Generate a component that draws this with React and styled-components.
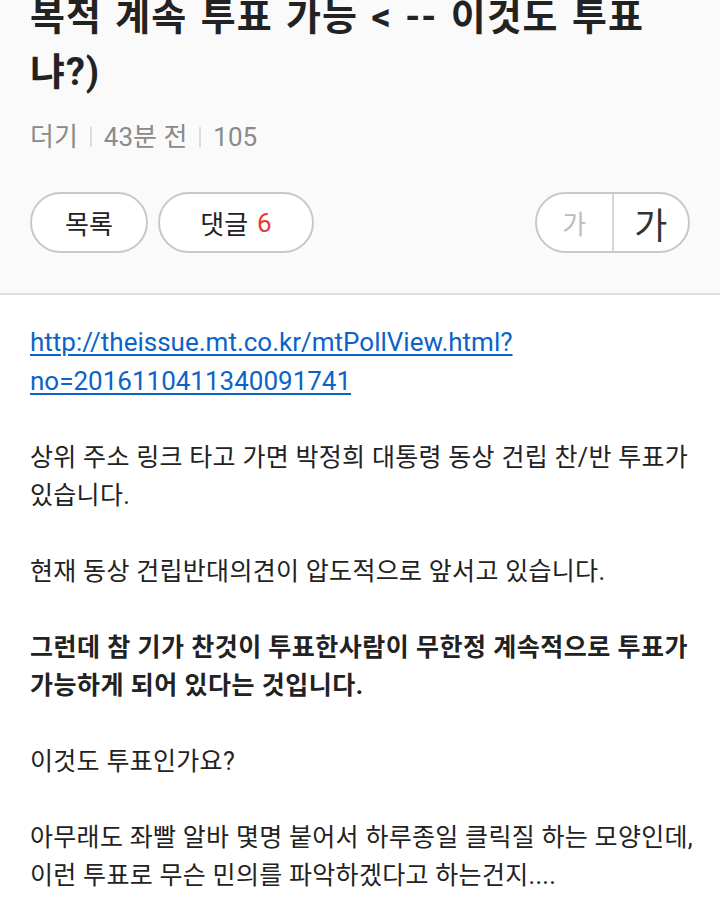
import React from "react";
import styled, { createGlobalStyle } from "styled-components";

const Global = createGlobalStyle`
  html, body { margin: 0; padding: 0; background: #ffffff; }
  body {
    font-family: Roboto, "Noto Sans CJK KR", sans-serif;
    -webkit-font-smoothing: antialiased;
  }
  * { box-sizing: border-box; }
`;

const Page = styled.div`
  width: 720px;
  min-height: 910px;
  background: #ffffff;
  overflow: hidden;
`;

const Header = styled.header`
  background: #fafafa;
  border-bottom: 2px solid #dedede;
  padding: 0 30px 40px;
`;

const Title = styled.h1`
  margin: -10px 0 0;
  font-size: 38px;
  line-height: 55px;
  font-weight: 700;
  color: #222222;
  letter-spacing: 1px;
  word-spacing: 3px;
`;

const Meta = styled.div`
  margin-top: 22px;
  display: flex;
  align-items: center;
  font-size: 26px;
  line-height: 30px;
  color: #8a8a8a;
`;

const MetaItem = styled.span``;

const Sep = styled.span`
  display: inline-block;
  width: 2px;
  height: 20px;
  background: #dcdcdc;
  margin: 0 12px;
`;

const Toolbar = styled.div`
  margin-top: 40px;
  display: flex;
  align-items: center;
`;

const Pill = styled.button`
  height: 61px;
  width: ${(p) => p.$w}px;
  margin-right: 10px;
  border: 2px solid #c8c8c8;
  border-radius: 31px;
  background: #ffffff;
  font-family: Roboto, "Noto Sans CJK KR", sans-serif;
  font-size: 26px;
  color: #222222;
  display: flex;
  align-items: center;
  justify-content: center;
  padding: 0;
  cursor: pointer;
`;

const Count = styled.span`
  color: #e53935;
  margin-left: 9px;
`;

const Spacer = styled.div`
  flex: 1;
`;

const SizeToggle = styled.div`
  height: 61px;
  width: 155px;
  border: 2px solid #c8c8c8;
  border-radius: 31px;
  background: #ffffff;
  display: flex;
  overflow: hidden;
`;

const SizeBtn = styled.button`
  flex: 1;
  border: none;
  background: transparent;
  padding: 0;
  font-family: Roboto, "Noto Sans CJK KR", sans-serif;
  font-size: ${(p) => (p.$large ? 36 : 26)}px;
  color: ${(p) => (p.$large ? "#333333" : "#bdbdbd")};
  border-left: ${(p) => (p.$large ? "2px solid #d6d6d6" : "none")};
  display: flex;
  align-items: center;
  justify-content: center;
`;

const Content = styled.article`
  padding: 28px 10px 0 30px;
  font-size: 25px;
  line-height: 38px;
  color: #222222;
`;

const Link = styled.a`
  color: #0b63c9;
  font-size: 26px;
  text-decoration: underline;
  text-underline-offset: 3px;
  word-break: break-all;
`;

const Para = styled.p`
  margin: 0 0 38px;
  font-weight: ${(p) => (p.$bold ? 700 : 400)};
  letter-spacing: ${(p) => (p.$bold ? "0.5px" : "0.3px")};
`;

const LinkPara = styled.p`
  margin: 0 0 38px;
`;

export default function App() {
  return (
    <Page>
      <Global />
      <Header>
        <Title>복적 계속 투표 가능 &lt; -- 이것도 투표 냐?)</Title>
        <Meta>
          <MetaItem>더기</MetaItem>
          <Sep />
          <MetaItem>43분 전</MetaItem>
          <Sep />
          <MetaItem>105</MetaItem>
        </Meta>
        <Toolbar>
          <Pill $w={118}>목록</Pill>
          <Pill $w={156}>
            댓글<Count>6</Count>
          </Pill>
          <Spacer />
          <SizeToggle>
            <SizeBtn>가</SizeBtn>
            <SizeBtn $large>가</SizeBtn>
          </SizeToggle>
        </Toolbar>
      </Header>
      <Content>
        <LinkPara>
          <Link href="#">
            http://theissue.mt.co.kr/mtPollView.html?
            <br />
            no=2016110411340091741
          </Link>
        </LinkPara>
        <Para>상위 주소 링크 타고 가면 박정희 대통령 동상 건립 찬/반 투표가 있습니다.</Para>
        <Para>현재 동상 건립반대의견이 압도적으로 앞서고 있습니다.</Para>
        <Para $bold>그런데 참 기가 찬것이 투표한사람이 무한정 계속적으로 투표가 가능하게 되어 있다는 것입니다.</Para>
        <Para>이것도 투표인가요?</Para>
        <Para>
          아무래도 좌빨 알바 몇명 붙어서 하루종일 클릭질 하는 모양인데, 이런 투표로 무슨 민의를 파악하겠다고 하는건지....
        </Para>
      </Content>
    </Page>
  );
}
